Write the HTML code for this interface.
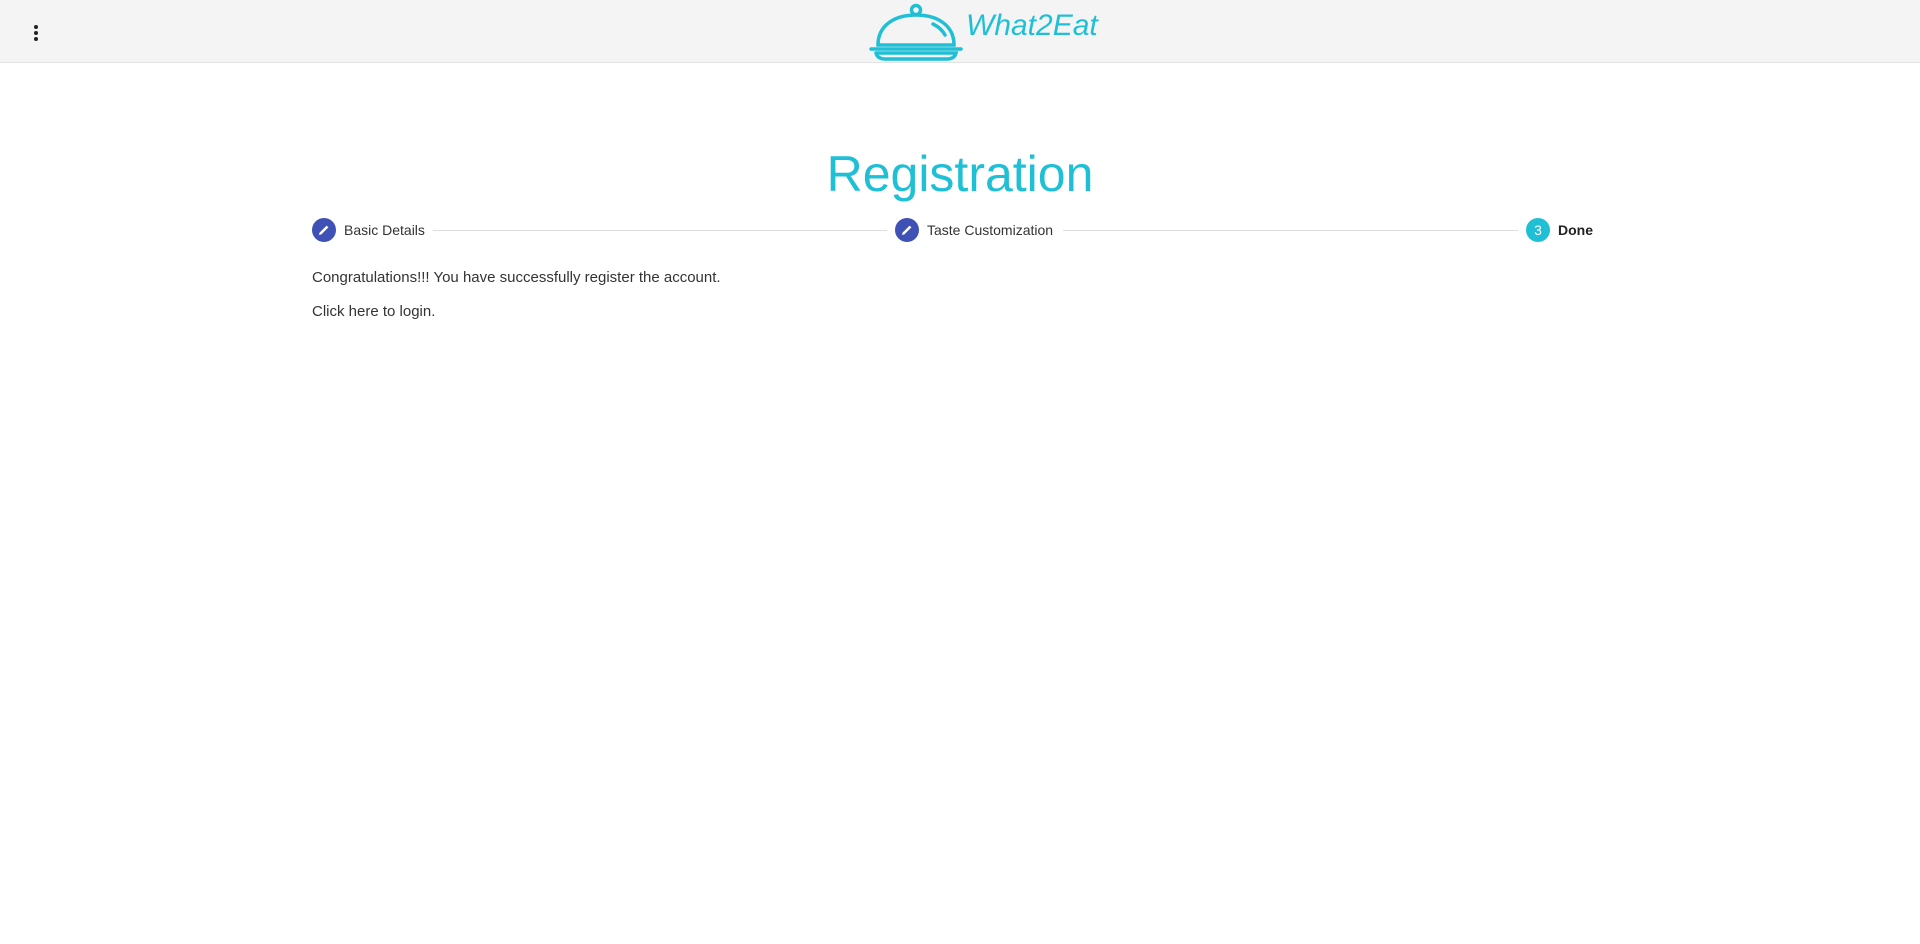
<!DOCTYPE html>
<html><head><meta charset="utf-8"><style>
*{margin:0;padding:0;box-sizing:border-box}
body{width:1920px;height:944px;background:#fff;font-family:"Liberation Sans",Arial,sans-serif;color:#333;position:relative;overflow:hidden}
.hdr{position:absolute;left:0;top:0;width:1920px;height:63px;background:#f4f4f4;border-bottom:1px solid #e4e4e4}
.dot{position:absolute;left:34px;width:4px;height:4px;border-radius:2px;background:#222}
.brand{position:absolute;left:966px;top:9px;font-size:30px;font-style:italic;font-weight:normal;color:#1fbfd6;letter-spacing:0px}
h1{position:absolute;left:0;width:1920px;text-align:center;top:145px;font-size:50px;font-weight:normal;color:#1fbfd6}
.c{position:absolute;top:218px;width:24px;height:24px;border-radius:12px;background:#3f51b5;color:#fff;font-size:14px;text-align:center;line-height:24px}
.t{position:absolute;top:222px;font-size:14px;color:#333}
.l{position:absolute;top:230px;height:1px;background:#ddd}
.p{position:absolute;left:312px;font-size:15px;color:#333}
</style></head><body>
<div class="hdr">
<div class="dot" style="top:25px"></div><div class="dot" style="top:31px"></div><div class="dot" style="top:37px"></div>
<svg style="position:absolute;left:869px;top:3px" width="94" height="58" viewBox="0 0 94 58" fill="none" stroke="#1fbfd6" stroke-width="3.5" stroke-linecap="round">
<circle cx="47" cy="7" r="4.5"/>
<path d="M9 42 C9 22 26 12 47 12 C68 12 85 22 85 42 Z"/>
<path d="M64 21 C70 24 74 28 76 32"/>
<path d="M2 46 H92"/>
<path d="M7 50 H87 C86 54 83 56 78 56 H16 C11 56 8 54 7 50"/>
</svg>
<div class="brand">What2Eat</div>
</div>
<h1>Registration</h1>
<div class="c" style="left:312px"><svg width="24" height="24" viewBox="0 0 24 24"><path d="M7 17 L7.6 14.6 L14.6 7.6 L16.4 9.4 L9.4 16.4 Z" fill="#fff"/></svg></div>
<div class="t" style="left:344px">Basic Details</div>
<div class="l" style="left:433px;width:454px"></div>
<div class="c" style="left:895px"><svg width="24" height="24" viewBox="0 0 24 24"><path d="M7 17 L7.6 14.6 L14.6 7.6 L16.4 9.4 L9.4 16.4 Z" fill="#fff"/></svg></div>
<div class="t" style="left:927px">Taste Customization</div>
<div class="l" style="left:1063px;width:455px"></div>
<div class="c" style="left:1526px;background:#1fbfd6">3</div>
<div class="t" style="left:1558px;font-weight:bold;color:#222">Done</div>
<div class="p" style="top:269px">Congratulations!!! You have successfully register the account.</div>
<div class="p" style="top:303px">Click here to login.</div>
</body></html>
